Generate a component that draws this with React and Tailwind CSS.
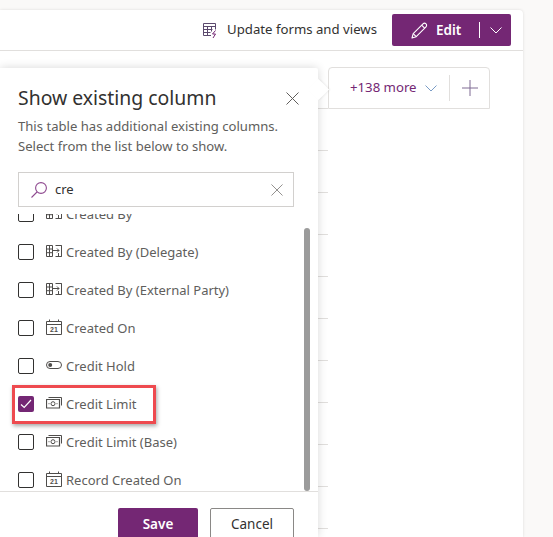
import { useState } from 'react'

const PURPLE = 'bg-[#742774]'

function FormsIcon() {
  return (
    <svg width="17" height="17" viewBox="0 0 17 17" fill="none" stroke="#5c4a6e" strokeWidth="1">
      <path d="M9 13.5H1.5v-12h12v6" />
      <path d="M1.5 4.5h12M1.5 7.5h9M1.5 10.5h7M5.5 4.5v9M9.5 4.5v5" />
      <path d="M13.5 8.5l-3 3.5h3l-2.5 4" stroke="#742774" />
    </svg>
  )
}

function PencilIcon() {
  return (
    <svg width="17" height="17" viewBox="0 0 17 17" fill="none" stroke="white" strokeWidth="1.1" strokeLinejoin="round">
      <path d="M1 16l1.2-4.4L12 1.8c.8-.8 2.2-.8 3 0s.8 2.2 0 3l-9.8 9.9L1 16z" />
      <path d="M10.6 3.2l3 3M2.2 11.6l3 3" />
    </svg>
  )
}

function Chevron({ color = 'white', width = 12 }) {
  return (
    <svg width={width} height="7" viewBox="0 0 12 7" fill="none" stroke={color} strokeWidth="1">
      <path d="M0.5 0.5L6 6l5.5-5.5" />
    </svg>
  )
}

function CloseIcon({ size = 13, color = '#605e5c' }) {
  return (
    <svg width={size} height={size} viewBox="0 0 13 13" fill="none" stroke={color} strokeWidth="1">
      <path d="M0.5 0.5l12 12M12.5 0.5l-12 12" />
    </svg>
  )
}

function SearchIcon() {
  return (
    <svg width="16" height="16" viewBox="0 0 16 16" fill="none" stroke="#8f4a90" strokeWidth="1.1">
      <circle cx="10" cy="6" r="5.4" />
      <path d="M6 10l-5.5 5.5" />
    </svg>
  )
}

function LookupIcon() {
  return (
    <svg width="16" height="14" viewBox="0 0 16 14" fill="none" stroke="#4f4d4b" strokeWidth="1">
      <path d="M0.5 1.5h6v11h-6zM0.5 5h6M0.5 8.7h6M3.5 1.5v11" />
      <path d="M9.5 1.5h6v11h-6" />
      <path d="M15.5 1.5v11M12.5 9v3.5" />
      <path d="M7 6.5h6M11 4.5l2 2-2 2" />
    </svg>
  )
}

function DateIcon() {
  return (
    <svg width="16" height="16" viewBox="0 0 16 16" fill="none" stroke="#4f4d4b" strokeWidth="1">
      <path d="M0.5 2.5h15v13h-15zM0.5 5.5h15M3.5 0.5v2M12.5 0.5v2" />
      <text x="8" y="13.2" textAnchor="middle" fontSize="7" fontWeight="700" fontFamily="Liberation Sans, sans-serif" fill="#4f4d4b" stroke="none">21</text>
    </svg>
  )
}

function ToggleIcon() {
  return (
    <svg width="16" height="9" viewBox="0 0 16 9" fill="none" stroke="#4f4d4b" strokeWidth="1">
      <rect x="0.5" y="0.5" width="15" height="7" rx="3.5" />
      <circle cx="4.2" cy="4" r="2" fill="#4f4d4b" stroke="none" />
    </svg>
  )
}

function MoneyIcon() {
  return (
    <svg width="16" height="12" viewBox="0 0 16 12" fill="none" stroke="#4f4d4b" strokeWidth="1">
      <path d="M2.5 0.5h13v8" />
      <path d="M0.5 2.5h13v8.5h-13z" strokeWidth="1.2" />
      <circle cx="7" cy="6.7" r="2" />
      <path d="M2.5 6.7h1M10.5 6.7h1" />
    </svg>
  )
}

const columns = [
  { name: 'Created By', Icon: LookupIcon },
  { name: 'Created By (Delegate)', Icon: LookupIcon },
  { name: 'Created By (External Party)', Icon: LookupIcon },
  { name: 'Created On', Icon: DateIcon },
  { name: 'Credit Hold', Icon: ToggleIcon },
  { name: 'Credit Limit', Icon: MoneyIcon, checked: true },
  { name: 'Credit Limit (Base)', Icon: MoneyIcon },
  { name: 'Record Created On', Icon: DateIcon },
]

function ColumnRow({ name, Icon, checked }) {
  return (
    <div className="flex h-[38px] items-center">
      {checked ? (
        <span className={`flex h-4 w-4 items-center justify-center rounded-[2px] ${PURPLE}`}>
          <svg width="12" height="10" viewBox="0 0 12 10" fill="none" stroke="white" strokeWidth="1.2">
            <path d="M1 5.5l3.2 3L11 1" />
          </svg>
        </span>
      ) : (
        <span className="h-4 w-4 rounded-[2px] border border-[#323130]" />
      )}
      <span className="ml-3 flex w-4 -translate-y-[1px] justify-center">
        <Icon />
      </span>
      <span className="ml-1 translate-y-[1px] text-[13px] text-[#605e5c]">{name}</span>
    </div>
  )
}

export default function App() {
  const [query, setQuery] = useState('cre')

  return (
    <div className="relative h-[537px] w-[553px] overflow-hidden bg-[#faf9f8] pt-[10px] font-['Noto_Sans',sans-serif]">
      <div className="flex h-[527px] w-[523px] flex-col rounded-tr bg-white shadow-[0_0_3px_rgba(0,0,0,0.12)]">
        <div className="flex h-[41px] shrink-0 items-center justify-end border-b border-[#e1dfdd] pr-3">
          <FormsIcon />
          <span className="ml-2 text-[13.2px] text-[#323130]">Update forms and views</span>
          <button className={`ml-[15px] flex h-8 w-[119px] items-center rounded-[2px] pl-[19px] text-white ${PURPLE}`}>
            <PencilIcon />
            <span className="ml-2 text-[13.5px] font-semibold">Edit</span>
            <span className="ml-[18px] h-4 w-px bg-white" />
            <span className="ml-[10px]"><Chevron /></span>
          </button>
        </div>

        <div className="flex flex-1 overflow-hidden pt-4">
          <div className="w-[328px] shrink-0">
            {[...Array(11)].map((_, i) => (
              <div key={i} className="h-[42px] border-b border-[#e1dfdd]" />
            ))}
          </div>
          <div className="flex h-[42px] w-[162px] items-center rounded-tr rounded-tl border border-[#e1dfdd] pl-[21px]">
            <span className="text-[13.2px] text-[#742774]">+138 more</span>
            <span className="ml-2"><Chevron color="#7a9cc6" width={12} /></span>
            <span className="ml-3 h-[26px] w-px bg-[#e1dfdd]" />
            <svg className="ml-3" width="16" height="16" viewBox="0 0 16 16" fill="none" stroke="#7f6a93" strokeWidth="1">
              <path d="M0 8h16M8 0v16" />
            </svg>
          </div>
        </div>
      </div>

      <div className="absolute left-0 top-[68px] flex h-[469px] w-[318px] flex-col rounded-tr-[2px] bg-white shadow-[0_0_10px_rgba(0,0,0,0.16)]">
        <span className="absolute left-[311px] top-[14px] h-[15px] w-[15px] rotate-45 bg-white shadow-[1px_-1px_2px_rgba(0,0,0,0.06)]" />
        <div className="relative flex flex-col px-[18px] pt-[15px]">
          <div className="flex items-center justify-between pr-[1px]">
            <h2 className="text-[19.4px] font-normal leading-[30px] text-[#323130]">Show existing column</h2>
            <CloseIcon />
          </div>
          <p className="mt-[3px] text-[13.1px] leading-[20px] text-[#605e5c]">
            This table has additional existing columns.
            <br />
            Select from the list below to show.
          </p>
          <div className="mt-4 flex h-[35px] w-[276px] items-center border border-[#d2d0ce] pl-3 pr-[10px]">
            <SearchIcon />
            <input
              className="ml-2 min-w-0 flex-1 bg-transparent text-[13px] text-[#323130] outline-none"
              value={query}
              onChange={e => setQuery(e.target.value)}
            />
            <CloseIcon size={12} color="#8a8886" />
          </div>
        </div>

        <div className="relative mt-[7px] flex-1 overflow-hidden pl-[18px]">
          <div className="-mt-[19px]">
            {columns.map(c => <ColumnRow key={c.name} {...c} />)}
          </div>
          <div className="absolute right-2 top-[14px] bottom-0 w-1.5 rounded-t-[3px] rounded-b-[3px] bg-[#9b9b9b]" />
        </div>

        <div className="flex h-[46px] shrink-0 gap-3 border-t border-[#e1dfdd] pl-[118px] pt-4">
          <button className={`h-8 w-20 rounded-[2px] text-[13.5px] font-semibold text-white ${PURPLE}`}>Save</button>
          <button className="h-8 w-[84px] rounded-[2px] border border-[#8a8886] text-[13.5px] text-[#323130]">Cancel</button>
        </div>
      </div>

      <div className="absolute left-3 top-[385px] h-[39px] w-[144px] border-[3px] border-[#ee4a4f] shadow-[1px_2px_4px_rgba(0,0,0,0.35)]" />
    </div>
  )
}
